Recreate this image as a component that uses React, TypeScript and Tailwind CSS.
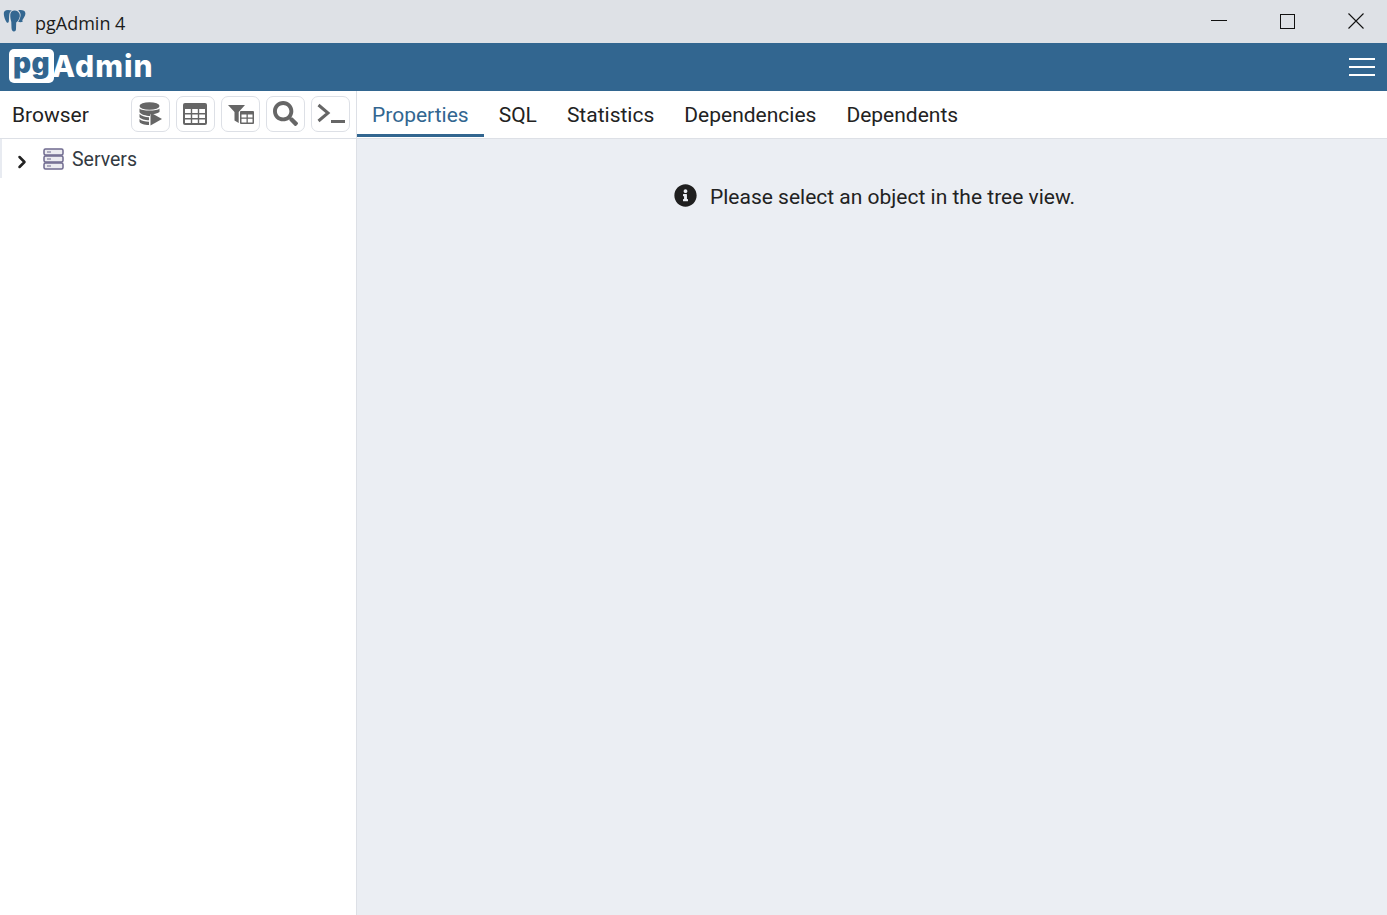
import { ChevronRight } from "lucide-react";
import { FaInfoCircle, FaSearch } from "react-icons/fa";

const tabs = ["Properties", "SQL", "Statistics", "Dependencies", "Dependents"];

function ElephantIcon() {
    return (
        <svg width="24" height="24" viewBox="0 0 24 24" className="shrink-0">
            {/* left ear */}
            <path d="M5 1C2.200 1 .6 2.500 .8 5c.2 3 1.400 6.500 2.800 8.200.9 1 1.900.5 2.200-.8C6.200 10 6 7.500 6.300 5.500 6.500 3.500 7.300 2.200 8.800 1.500 7.600 1.200 6.300 1 5 1z" fill="#336791" />
            {/* head and trunk */}
            <path d="M12 1.500c-2.700-.2-4.500 1.200-4.700 4-.2 2.500.4 5.500 1 7.500l.2 6c.1 2.300 1 3.500 2.400 3.500 1.500 0 2.100-1 2.100-2.800l.2-6.200c1.700-1 3.100-3.500 3.600-6 .5-3-1.800-5.800-4.800-6z" fill="#336791" />
            {/* right ear */}
            <path d="M17.500 1c-1-.1-1.700.1-2.200.4 1.800 1.400 2.600 3.300 2.200 5.600-.3 2-1.200 4.200-2.400 5.800 1.400.6 3.700.5 4.800-.2-.5-.5-.7-1-.5-1.700 1.300-1.800 3-4.400 3-6.500C22.400 2 20.200 1.100 17.500 1z" fill="#336791" />
        </svg>
    );
}

function QueryToolIcon() {
    return (
        <svg width="24" height="24" viewBox="0 0 24 24" fill="#666666">
            <ellipse cx="10.500" cy="4" rx="10" ry="3.800" />
            <path d="M.5 6.500c2 2.800 18 2.800 20 0V10c-2 1.600-6 2.300-9.500 2.300V14C7 14 2 12.500.5 10.300z" />
            <path d="M.5 12c1.800 2 5.500 3.200 9.500 3.300v3C6 18.300 2 17 .5 15.200z" />
            <path d="M.5 17c1.800 1.800 5.500 2.800 9.500 2.800V23C5.500 23 .5 21.500.5 19.500z" />
            <path d="M11.500 10.500 23 17 11.500 23.500z" />
        </svg>
    );
}

function TableIcon() {
    return (
        <svg width="24" height="22" viewBox="0 0 24 22" className="-ml-[1px]">
            <rect x="0" y="0" width="24" height="22" rx="2" fill="#666666" />
            <path
                d="M2 6h5.800v4H2zM9.200 6h5.600v4H9.200zM16.200 6H22v4h-5.800zM2 11.500h5.800v3.500H2zM9.200 11.500h5.600v3.500H9.200zM16.200 11.500H22v3.500h-5.800zM2 16.500h5.800V20H2zM9.200 16.500h5.600V20H9.200zM16.200 16.500H22V20h-5.800z"
                fill="#fff"
            />
        </svg>
    );
}

function FilteredRowsIcon() {
    return (
        <svg width="26" height="22" viewBox="0 0 26 22" fill="#666666">
            <path d="M0 2h17l-6.300 7v11l-4.200-2.500V9z" />
            <rect x="12" y="8" width="14" height="13" rx="1" />
            <path
                d="M13.500 11.500h5v3h-5zM19.800 11.500h4.700v3h-4.700zM13.500 15.800h5v3.700h-5zM19.800 15.800h4.700v3.700h-4.700z"
                fill="#fff"
            />
        </svg>
    );
}

function PsqlIcon() {
    return (
        <svg width="28" height="22" viewBox="0 0 28 22" fill="none" stroke="#666666" strokeWidth="3">
            <path d="M1.500 2 11 10 1.500 18" />
            <path d="M14 18.500h14" />
        </svg>
    );
}

function ToolButton({ children }: { children: React.ReactNode }) {
    return (
        <button className="flex h-[36px] w-[39px] items-center justify-center rounded-[7px] border border-[#dde0e6] bg-white">
            {children}
        </button>
    );
}

function ServersIcon() {
    return (
        <svg width="21" height="22" viewBox="0 0 21 22" fill="#ececf0" stroke="#6f6a8f" strokeWidth="1.500">
            <rect x="1" y="1" width="19" height="6" rx="1.500" />
            <rect x="1" y="8" width="19" height="6" rx="1.500" />
            <rect x="1" y="15" width="19" height="6" rx="1.500" />
            <path d="M4 4h4M4 11h4M4 18h4" strokeWidth="1" />
        </svg>
    );
}

export default function App() {
    return (
        <div className="flex h-[915px] w-[1387px] flex-col overflow-hidden bg-white font-['Roboto',sans-serif] text-[#222222]">
            {/* Window title bar */}
            <div className="flex h-[43px] shrink-0 items-start bg-[#dee1e6]">
                <div className="mt-[9px] ml-[3px]">
                    <ElephantIcon />
                </div>
                <span className="mt-[11px] ml-[8px] font-['Open_Sans',sans-serif] text-[18px] leading-[24px] text-[#1b1b1b]">
                    pgAdmin 4
                </span>
                <div className="ml-auto flex">
                    <div className="flex h-[41px] w-[69px] items-center justify-center">
                        <div className="h-[1px] w-[16px] bg-[#111]" />
                    </div>
                    <div className="flex h-[43px] w-[69px] items-center justify-center">
                        <div className="h-[15px] w-[15px] border-[1.5px] border-[#111]" />
                    </div>
                    <div className="ml-[3px] flex h-[43px] w-[62px] items-center justify-center">
                        <svg width="16" height="16" viewBox="0 0 16 16" stroke="#111" strokeWidth="1.100" className="-mt-[1px]">
                            <path d="M.5.500l15 15M15.500.500l-15 15" />
                        </svg>
                    </div>
                </div>
            </div>

            {/* App navbar */}
            <div className="flex h-[48px] shrink-0 items-center justify-between bg-[#326690] pr-[12px] pl-[9px]">
                <div className="-mt-[2px] flex items-center">
                    <div className="flex h-[34px] w-[45px] items-center justify-center rounded-[5px] bg-white pb-[7px] font-['Inter',sans-serif] text-[28px] leading-none font-black tracking-[0.5px] text-[#326690]">
                        pg
                    </div>
                    <span className="-ml-[2px] font-['Inter',sans-serif] text-[30px] leading-none font-extrabold tracking-[1px] text-white">
                        Admin
                    </span>
                </div>
                <div className="flex w-[26px] flex-col gap-[6px]">
                    <div className="h-[2px] bg-white" />
                    <div className="h-[2px] bg-white" />
                    <div className="h-[2px] bg-white" />
                </div>
            </div>

            <div className="flex min-h-0 flex-1">
                {/* Browser panel */}
                <div className="flex w-[357px] shrink-0 flex-col border-r border-[#dde0e6]">
                    <div className="flex h-[48px] shrink-0 items-center justify-between border-b border-[#dde0e6] pr-[6px] pl-[12px]">
                        <span className="mt-[3px] text-[21px]">Browser</span>
                        <div className="-mt-[1px] flex gap-[6px]">
                            <ToolButton>
                                <QueryToolIcon />
                            </ToolButton>
                            <ToolButton>
                                <TableIcon />
                            </ToolButton>
                            <ToolButton>
                                <FilteredRowsIcon />
                            </ToolButton>
                            <ToolButton>
                                <FaSearch size={25} color="#666666" className="-mt-[2px]" />
                            </ToolButton>
                            <ToolButton>
                                <PsqlIcon />
                            </ToolButton>
                        </div>
                    </div>
                    <div className="flex h-[39px] items-center border-l-2 border-[#e8ebf1] pl-[10px]">
                        <ChevronRight size={20} strokeWidth={3} color="#222" className="mt-[7px]" />
                        <div className="ml-[11px]">
                            <ServersIcon />
                        </div>
                        <span className="mt-[2px] ml-[8px] text-[19.5px] text-[#333a42]">Servers</span>
                    </div>
                </div>

                {/* Right panel */}
                <div className="flex min-w-0 flex-1 flex-col bg-[#ebeef3]">
                    <div className="flex h-[48px] shrink-0 border-b border-[#dde0e6] bg-white">
                        {tabs.map((tab, i) => (
                            <div
                                key={tab}
                                className={
                                    i === 0
                                        ? "flex h-[46px] items-center border-b-[3px] border-[#326690] px-[15px] pt-[7px] text-[21px] text-[#326690]"
                                        : "flex h-[46px] items-center border-b-[3px] border-transparent px-[15px] pt-[7px] text-[21px] text-[#222222]"
                                }
                            >
                                {tab}
                            </div>
                        ))}
                    </div>
                    <div className="flex justify-center pt-[44px] pl-[5px]">
                        <div className="flex items-center gap-[13px] text-[21px] leading-[28px] text-[#222222]">
                            <FaInfoCircle size={23} color="#1f1f1f" className="-mt-[3px]" />
                            <span>Please select an object in the tree view.</span>
                        </div>
                    </div>
                </div>
            </div>
        </div>
    );
}
